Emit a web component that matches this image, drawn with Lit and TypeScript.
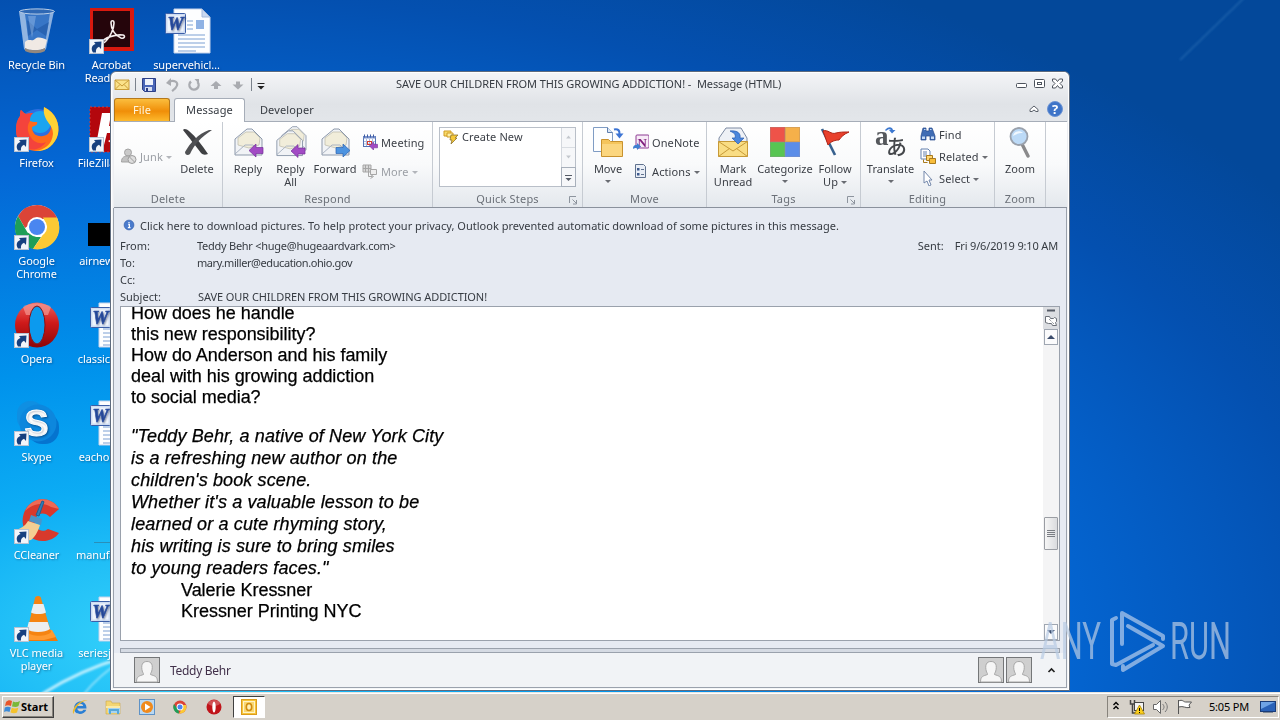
import { LitElement, html, css, svg, nothing, TemplateResult } from 'lit';
import { customElement, property } from 'lit/decorators.js';

const shortcut = svg`
  <rect x="1.500" y="32.500" width="14" height="14" fill="#f2f5fa" stroke="#b9c3d2"/>
  <path d="M5 45.500c-2.500-4-1-7.500 2.500-8.500L6 35l7.500-.5-.5 7.500-2-2.200C8.500 41 7.500 43 8 45.500z" fill="#17407f"/>`;

const wordDoc = svg`
  <path d="M11 2h28l8 8v36H11z" fill="#fdfeff" stroke="#c4d2ea"/>
  <path d="M39 2v8h8z" fill="#c9d8f0" stroke="#a6badb"/>
  <rect x="33" y="13" width="8" height="9" fill="#8fb2e4"/>
  <path d="M24 14h6M24 18h6M24 22h6M15 28h27M15 32h27M15 36h27M15 40h27M15 44h18" stroke="#7c9fd4" stroke-width="1.200"/>
  <rect x="2.500" y="6.500" width="20" height="20" rx="1" fill="#cfdcf2" stroke="#3c5fa8"/>
  <rect x="4.500" y="8.500" width="16" height="16" fill="#f0f5fd"/>
  <text x="12.500" y="23" text-anchor="middle" font-family="Liberation Serif" font-size="18" font-weight="700" font-style="italic" fill="#2b4fa3" stroke="#2b4fa3" stroke-width=".6">W</text>`;

const desktopArt: Record<string, TemplateResult> = {
  bin: svg`
    <path d="M6 4l5 38c5 4 17 4 22 0l8-38z" fill="#4a82cc" opacity=".75"/>
    <path d="M6 4l5 38c2 2 4 3 6 3L12 7z" fill="#c3d7f0" opacity=".65"/>
    <path d="M33 42L41 4l-4 2-6 38z" fill="#c3d7f0" opacity=".6"/>
    <path d="M14 13l10 9 12-7-3 14-9-6-9 6z" fill="#1f56a4" opacity=".6"/>
    <path d="M15 9h8l-4 22z" fill="#a9c7ea" opacity=".4"/>
    <path d="M12 35c4-4 7 0 10-3s8-1 12 1l-2 8c-5 3-14 3-20 0z" fill="#f0e9e4"/>
    <path d="M12 41c5 3 15 3 20 0v3c-5 3-14 3-20 0z" fill="#94887e"/>
    <ellipse cx="24" cy="4.500" rx="17.500" ry="2.600" fill="#2f68b4" stroke="#bccfe6"/>`,
  acrobat: svg`
    <rect x="2" y="1" width="44" height="43" fill="#d8190f"/>
    <rect x="5" y="4" width="37" height="36" fill="#25050b"/>
    <path d="M14 35c2-4 13-8 21-7 3 1 1 4-2 3-5-2-10-8-10-15 0-3 3-3 3 0 0 6-4 14-8 18-2 2-4 3-4 1z" fill="none" stroke="#f4eded" stroke-width="1.600"/>
    ${shortcut}`,
  word: wordDoc,
  firefox: svg`
    <circle cx="25" cy="24" r="20" fill="#2f6fe0"/>
    <circle cx="27" cy="17" r="11" fill="#1aa4f0"/>
    <path d="M31 2c12 6 16 17 14 27-3 12-13 18-23 17C11 45 3 37 3 25c0-6 1-10 4-14 0-2 0-5 1-6 2 2 3 3 5 4 3-1 5-1 7-1-3 3-3 5-3 8 2 1 5 1 7 1 1 2-1 4-5 5 0 7 5 10 11 9 8-1 10-10 6-17-1-4-4-8-5-12z" fill="#ff6a1c"/>
    <path d="M31 2c12 6 16 17 14 27-3 12-13 18-23 17 9-1 17-6 18-17 0-6-3-9-5-12-3-4-5-9-4-15z" fill="#ffd234"/>
    <path d="M3 25c0-6 1-10 4-14 0-2 0-5 1-6 2 2 3 3 5 4 3-1 5-1 7-1-3 3-3 5-3 8-3 4-3 10 0 15 3 6 10 9 16 6-4 6-12 10-20 6C7 39 3 33 3 25z" fill="#f0334a" opacity=".7"/>
    ${shortcut}`,
  filezilla: svg`
    <rect x="2" y="2" width="45" height="45" fill="#b3070d" stroke="#d23a3a" stroke-dasharray="2 2"/>
    <path d="M14 8h26l-2 7H22l-1 6h13l-2 7H19l-3 12H8z" fill="#fff"/>
    <path d="M20 36l6-3v7z" fill="#fff"/>${shortcut}`,
  chrome: svg`
    <circle cx="24" cy="24" r="22" fill="#fff"/>
    <path d="M24 2a22 22 0 0 1 20.500 14H24L12 25 5 13A22 22 0 0 1 24 2z" fill="#db4437"/>
    <path d="M5 13l9.500 16.500L24 34l4 0-8 12A22 22 0 0 1 5 13z" fill="#1e9e57"/>
    <path d="M44 14.500A22 22 0 0 1 20 46l9-13 5-9-4-9.500z" fill="#fcc934"/>
    <circle cx="24" cy="24" r="10" fill="#fff"/><circle cx="24" cy="24" r="8" fill="#4a86f0"/>
    ${shortcut}`,
  black: svg`<rect x="0" y="20" width="48" height="23" fill="#000"/>`,
  opera: svg`
    <ellipse cx="24" cy="24" rx="22" ry="22.500" fill="url(#op)"/>
    <defs><linearGradient id="op" x1="0" y1="0" x2="0" y2="1"><stop offset="0" stop-color="#f0605c"/><stop offset=".45" stop-color="#cf1a1a"/><stop offset="1" stop-color="#8d0506"/></linearGradient></defs>
    <path d="M10 6c8-5 20-5 28 0l-3 8H13z" fill="#f7a6a0" opacity=".6"/>
    <ellipse cx="24" cy="24" rx="8" ry="19" fill="#0c9aee" stroke="#8a1012"/>
    ${shortcut}`,
  skype: svg`
    <rect x="4" y="2" width="27" height="30" rx="13" fill="#0f8fe2"/>
    <rect x="15" y="14" width="31" height="31" rx="14" fill="#0574cf"/>
    <circle cx="25" cy="24" r="18.500" fill="#0d87dd"/>
    <text x="23.500" y="37" text-anchor="middle" font-family="Liberation Sans" font-size="36" font-weight="700" fill="#fff" stroke="#fff">S</text>
    ${shortcut}`,
  ccleaner: svg`
    <path d="M46 12L37 20c-6-6-13-4-15 3-1 8 6 14 13 9l11 4c-6 9-21 11-30 3-9-9-8-23 0-31 9-9 24-7 30 4z" fill="#d8392c"/>
    <path d="M46 12C40 1 25-1 16 8c-2 2-3 4-4 6 8-8 19-9 26-4z" fill="#ee6a55"/>
    <path d="M29 4l2 .8L26 19l-3-1z" fill="#2e7fb8" stroke="#1d5f94"/>
    <path d="M18 18l11 4-1 6-12-4z" fill="#4b94c8"/>
    <path d="M15 24l12 4c-2 7-6 13-9 15-6 1-12-1-17-10 7-1 11-4 14-9z" fill="#f4cf93"/>
    ${shortcut}`,
  blank: svg`<path d="M6 45.500h42" stroke="#2a8fb8"/>`,
  vlc: svg`
    <path d="M11 36h28l6 10H12z" fill="#ef7a0c"/><path d="M9 38l5-3h25l4 7-12 3H12z" fill="#ff9a30"/>
    <path d="M25 1c2 0 3 1 3 2l10 34c-4 5-20 5-24 0L22 3c0-1 1-2 3-2z" fill="#f58412"/>
    <path d="M20.500 9h10l2.500 8.500c-4 2-11 2-15 0zM15.700 27h19l2.300 7c-5 4-19 4-23 0z" fill="#eceeef"/>
    ${shortcut}`,
};

const envelope = svg`
  <path d="M3 13L15 3h5l10 10v16H3z" fill="#f1f3f6" stroke="#8d99ab"/>
  <path d="M6 12l8-6h8l6 6-1 7-10 3-11-3z" fill="#f1edda" stroke="#b9b7a6" stroke-width=".7"/>
  <path d="M3 28l10-9h8l9 9" fill="none" stroke="#a9b3c2"/>`;

const icons: Record<string, TemplateResult> = {
  mail: svg`<path d="M1 3h14v9.500H1z" fill="#fbe28a" stroke="#c99d38"/><path d="M1 3l7 6 7-6M1 12.500l5-5M15 12.500l-5-5" fill="none" stroke="#c99d38"/>`,
  save: svg`<path d="M1.500 1.500h13v13h-11l-2-2z" fill="#4a66b8" stroke="#2c3f86"/><rect x="4" y="2" width="8" height="6" fill="#eef2fb"/><rect x="4" y="10" width="7" height="4" fill="#d6def2"/><rect x="5" y="11" width="2" height="3" fill="#2c3f86"/>`,
  undo: svg`<path d="M5 4.500c6-2 9 1 8 4s-3 4-5 5.500" fill="none" stroke="#a9abb0" stroke-width="2.200"/><path d="M7 1v8L2 6z" fill="#a9abb0"/>`,
  redo: svg`<path d="M5 4.500a4.600 4.600 0 1 0 6.500.5" fill="none" stroke="#a9abb0" stroke-width="2.400"/><path d="M8.500 2H13v5z" fill="#a9abb0"/>`,
  up: svg`<path d="M8 4l5.500 5h-3.500v3H6V9H2.500z" fill="#a9abb0"/>`,
  down: svg`<path d="M8 12.500l5.500-5h-3.500v-3H6v3H2.500z" fill="#a9abb0"/>`,
  more: svg`<path d="M4.500 6.500h7" stroke="#222"/><path d="M4.500 9h7L8 12.500z" fill="#222"/>`,
  junk: svg`<circle cx="7" cy="4.500" r="3.500" fill="#c9c9c9" stroke="#a3a3a3"/><path d="M.5 14c0-5 3-6 6.500-6s5 1 5 3v3z" fill="#c2c2c2" stroke="#a3a3a3"/><circle cx="11" cy="11.500" r="4" fill="#dedede" stroke="#9c9c9c"/><path d="M8.500 9l5 5" stroke="#9c9c9c"/>`,
  cross: svg`<path d="M2 4c1-2 4-1 6 1 7 6 13 14 19 23-3 1-5 1-7-1C14 19 9 13 2 4z" fill="#3f4043"/><path d="M31 4C20 11 13 19 9 28c-2 2-5 1-5-2C9 17 17 8 28 4z" fill="#505154"/>`,
  reply: svg`${envelope}<path d="M17 24.500l7-6.500v3.500h7v6h-7V31z" fill="#a24bc4" stroke="#74309a" stroke-width=".7"/>`,
  replyAll: svg`<g transform="translate(4 -2) scale(.9)">${envelope}</g><g transform="translate(-1 2) scale(.95)">${envelope}</g><path d="M16 25l7-6.500V22h7v6h-7v3.500z" fill="#a24bc4" stroke="#74309a" stroke-width=".7"/>`,
  forward: svg`${envelope}<path d="M31 24.500l-7-6.500v3.500h-7v6h7V31z" fill="#4c93e0" stroke="#2a62b0" stroke-width=".7"/>`,
  meeting: svg`<rect x="1.500" y="2.500" width="12" height="10" fill="#fff" stroke="#5473b4"/><path d="M1.500 2h12v2.500h-12z" fill="#7d95cc"/><path d="M2.500 .5v3M5.500 .5v3M8.500 .5v3M11.500 .5v3" stroke="#3f5da4"/><path d="M4.500 5v7M7.500 5v7M10.500 5v7M2 7.500h11M2 10h11" stroke="#a9bae0"/><rect x="5.500" y="7.500" width="4" height="3" fill="none" stroke="#d43d30"/><path d="M7.500 12l4-4v2.300h4v3.500h-4V16z" fill="#a24bc4" stroke="#74309a" stroke-width=".6"/>`,
  moreReply: svg`<path d="M1 2h8v7H1zM3.500 2v7M6.500 2v7M1 5.500h8" fill="#d8d8d8" stroke="#a6a6a6"/><path d="M8.500 6.500h6v5h-6z" fill="#eee" stroke="#a6a6a6"/><path d="M6.500 9v4.500h4m-2-2l3 2-3 2" fill="none" stroke="#a6a6a6"/>`,
  bolt: svg`<path d="M1 2h7v5H1z" fill="#f8dc6c" stroke="#d09b22"/><path d="M4 4h6v4H4z" fill="#fff0a8" stroke="#d09b22"/><path d="M8 6h7l-3 3h2l-6 6 1-4H7z" fill="#f6c838" stroke="#8d7430" stroke-width=".8"/>`,
  move: svg`<path d="M1.500 1.500h14l5 5v19h-19z" fill="#fdfeff" stroke="#7f9cc4"/><path d="M15.500 1.500v5h5" fill="#dbe7f6" stroke="#5f7fae"/><path d="M9.500 13.500h7l2 2h12v15h-21z" fill="#f5c55c" stroke="#c8922e"/><path d="M10 18h20v12H10z" fill="#fbd67f"/><path d="M22 3.500c4-1 6 1 5.500 5" fill="none" stroke="#3c74d4" stroke-width="2.200"/><path d="M23.500 7.500h8l-4 5z" fill="#3c74d4"/>`,
  onenote: svg`<rect x="3" y="1" width="13" height="13" rx="1" fill="#f7ebf7" stroke="#8d3a93"/><text x="9.300" y="12.500" text-anchor="middle" font-family="Liberation Serif" font-size="13" font-weight="700" fill="#80207e">N</text><path d="M0 15c0-4 2-4 4-4V9l4 3.500L4 16v-2c-2 0-3 0-4 1z" fill="#3f7ed0"/>`,
  actions: svg`<path d="M2.500 1.500h8l2 2v11h-10z" fill="#e9eef6" stroke="#60728e"/><path d="M4 5h2.500v2.500H4zM4 10h2.500v2.500H4z" fill="#3e5a8c"/><path d="M8 6.500h3M8 11.500h3" stroke="#60728e"/>`,
  unread: svg`<path d="M2 12L9 2h15l6 10v15H2z" fill="#eef1f6" stroke="#7c8aa2"/><path d="M1.500 15.500h29v15h-29z" fill="#f9dd84" stroke="#c79a38"/><path d="M1.500 15.500L16 25l14.500-9.500M1.500 30.500l11-8M30.500 30.500l-11-8" fill="none" stroke="#c79a38"/><path d="M13 5c8-1 11 3 10 7h4l-6 6-6-6h3c1-4-1-5-5-7z" fill="#4a86dc" stroke="#2a5bb0" stroke-width=".7"/>`,
  categorize: svg`<rect x="1.500" y="1.500" width="14" height="14" fill="#ee5349" stroke="#d2655d"/><rect x="16.500" y="1.500" width="14" height="14" fill="#f5b04a" stroke="#d9a155"/><rect x="1.500" y="16.500" width="14" height="14" fill="#58c553" stroke="#6bb368"/><rect x="16.500" y="16.500" width="14" height="14" fill="#5b8de8" stroke="#6d8fd4"/>`,
  flag: svg`<path d="M3 3l13 26" stroke="#38618e" stroke-width="2.600"/><path d="M4 5c5-2 8 4 13 2 4-1 7-1 13-1-5 2-8 5-10 8-3 0-8 1-11 5z" fill="#e8402c" stroke="#b02517"/>`,
  translate: svg`<text x="0" y="19" font-family="Liberation Serif" font-size="27" font-weight="700" fill="#55585c">a</text><text x="11" y="28" font-family="Noto Sans CJK JP" font-size="21" font-weight="500" fill="#45484c">あ</text><path d="M10 4c4-4 7-3 8 0h2.500L17 7.500 14 4h2c-1-1-3-1-5 1z" fill="#3c78d0"/>`,
  find: svg`<path d="M3 2h3v3h3V2h3l3 8v4h-5v-4H6v4H1v-4z" fill="#3f6cb4" stroke="#27498a" stroke-width=".7"/><path d="M2 10.500h3v2.500H2zM11 10.500h3v2.500h-3z" fill="#c4daf6"/><path d="M4 3.500h1.500M10 3.500h1.500" stroke="#c4daf6"/>`,
  related: svg`<path d="M1 1h7l2 2v8H1z" fill="#fff" stroke="#6481ae"/><path d="M3 4h4M3 6h4M3 8h4" stroke="#6481ae"/><path d="M6.500 7.500h6v5h-6z" fill="#ffd774" stroke="#a97a1c"/><path d="M9.500 10.500h6v5h-6z" fill="#f8bd3b" stroke="#a97a1c"/><path d="M3.500 11.500v3h4" fill="none" stroke="#a97a1c"/>`,
  select: svg`<path d="M4 1l8 9H9l2 5-2 1-2-5-3 2z" fill="#fff" stroke="#7488ab"/>`,
  zoom: svg`<path d="M18 18l6 12" stroke="#8a8a8c" stroke-width="3.400" stroke-linecap="round"/><circle cx="15" cy="10.500" r="8.500" fill="#bcdaf7" stroke="#9aa1ac" stroke-width="1.800"/><path d="M9 10c1-5 7-6 10-3-4 0-7 1-10 3z" fill="#f1f8ff"/>`,
  info: svg`<circle cx="8" cy="8" r="6.500" fill="#4a7bcd" stroke="#3560ad"/><path d="M8 4v2M7 7.500h1.500v4M6.500 11.500h3.500" fill="none" stroke="#fff" stroke-width="1.600"/>`,
  person: svg`<rect x=".5" y=".5" width="25" height="25" fill="#cfcfcf" stroke="#747678"/><path d="M2.500 25c0-6 3-6 7-7.500 0-1 0-1-1-2.500-2-7 0-10.500 4.500-10.500s6.500 3.500 4.500 10.500c-1 1.500-1 1.500-1 2.500 4 1.500 7 1.500 7 7.500z" fill="#f6f6f6" stroke="#a7a7a7"/>`,
};

const taskArt: Record<string, TemplateResult> = {
  ie: svg`<path d="M14.500 9.500H5.300c.4 3.500 5 3.500 6 1.200h3c-1.500 5.500-11.800 6-12.200-1C2 0.500 14.500 0 14.500 9.500zM5.500 7h5.700c-.5-3-5-3-5.700 0z" fill="#2a7fd4" fill-rule="evenodd"/><path d="M1.500 15C-2 10 9-1 15.500 1.500c-6 0-12.500 7-14 13.500z" fill="#e9b92c"/>`,
  explorer: svg`<path d="M1 2h5l1 2h8v11H1z" fill="#f3d573" stroke="#cda945" stroke-width=".6"/><path d="M3 8h12v6H3z" fill="#a8d4f0"/><path d="M1 7h14v2H1z" fill="#fbeaa5"/><path d="M4 10h10v5h-2v-3H6v3H4z" fill="#58a8d8"/>`,
  player: svg`<rect x=".5" y=".5" width="15" height="15" fill="#b9d8f2" stroke="#5e92c6"/><circle cx="8" cy="8" r="6" fill="#f08a1c"/><path d="M6 4.500v7L11.500 8z" fill="#fff"/>`,
  chrome: svg`<circle cx="8" cy="8" r="6.500" fill="#db4437"/><path d="M2 5l4.500 6L7 14.500A6.500 6.500 0 0 1 2 5z" fill="#1e9e57"/><path d="M14 6a6.500 6.500 0 0 1-7 8.500L11 8 9 6z" fill="#fcc934"/><circle cx="8" cy="8" r="3.400" fill="#fff"/><circle cx="8" cy="8" r="2.500" fill="#4a86f0"/>`,
  opera: svg`<circle cx="8" cy="8" r="7.500" fill="#c0141a"/><ellipse cx="8" cy="8" rx="1.700" ry="5.600" fill="#fff"/><ellipse cx="8" cy="4" rx="6" ry="3" fill="#fff" opacity=".25"/>`,
  outlook: svg`<rect x=".5" y=".5" width="15" height="15" fill="#f7c53a" stroke="#dc9c1a"/><rect x="2.500" y="2.500" width="11" height="11" fill="#f9d872" stroke="#fff3c8"/><ellipse cx="8" cy="8" rx="2.700" ry="3.500" fill="#fff0b8" stroke="#d08c10" stroke-width="1.600"/>`,
};

@customElement('desk-icon')
export class DeskIcon extends LitElement {
  static styles = css`
    :host {
      display: flex;
      flex-direction: column;
      align-items: center;
      color: #fff;
      font: 11px/13px 'Noto Sans', sans-serif;
      text-align: center;
      text-shadow: 1px 1px 2px rgba(0, 20, 60, 0.4);
    }

    .art {
      width: 48px;
      height: 48px;
      margin-bottom: 3px;
      flex: none;
    }

    .label {
      white-space: pre;
      letter-spacing: -0.1px;
    }
  `;

  @property() name = '';
  @property() label = '';

  render() {
    return html`
      <svg class="art" viewBox="0 0 48 48">${desktopArt[this.name]}</svg>
      <span class="label">${this.label}</span>
    `;
  }
}

@customElement('ribbon-button')
export class RibbonButton extends LitElement {
  static styles = css`
    :host {
      display: flex;
      align-items: center;
      color: #3b3f46;
      font: 11px/13px 'Noto Sans', sans-serif;
      letter-spacing: 0.1px;
    }

    :host([large]) {
      flex-direction: column;
      text-align: center;
      flex: none;
      letter-spacing: 0;
    }

    :host([disabled]) {
      color: #9b9fa5;
    }

    .icon {
      width: 16px;
      height: 16px;
      margin-right: 3px;
      flex: none;
    }

    :host([large]) .icon {
      width: 32px;
      height: 32px;
      margin: 0 0 4px;
    }

    .label {
      white-space: pre;
    }

    .arrow {
      display: inline-block;
      border: 3px solid transparent;
      border-top-color: currentColor;
      border-bottom: 0;
      margin-left: 3px;
      vertical-align: 2px;
      opacity: 0.75;
    }

    .below {
      margin: 5px 0 0;
    }
  `;

  @property() icon = '';
  @property() label = '';
  @property() arrow: '' | 'inline' | 'below' = '';
  @property({ type: Boolean, reflect: true }) large = false;
  @property({ type: Boolean, reflect: true }) disabled = false;

  render() {
    const size = this.large ? 32 : 16;
    return html`
      <svg class="icon" viewBox="0 0 ${size} ${size}">${icons[this.icon]}</svg>
      <span class="label">${this.label}${this.arrow === 'inline' ? html`<i class="arrow"></i>` : nothing}</span>
      ${this.arrow === 'below' ? html`<i class="arrow below"></i>` : nothing}
    `;
  }
}

@customElement('mail-window')
export class MailWindow extends LitElement {
  static styles = css`
    :host {
      display: flex;
      flex-direction: column;
      box-sizing: border-box;
      border: 1px solid #5e6b7e;
      border-radius: 6px 6px 0 0;
      padding: 0 2px 2px 3px;
      background: #f4f5f7;
      color: #363b42;
      font: 11px/13px 'Noto Sans', sans-serif;
      box-shadow: inset 0 0 0 1px #fff;
    }

    .i16 {
      display: block;
      width: 16px;
      height: 16px;
      flex: none;
    }

    .chrome {
      margin: 0 -1px;
      padding: 0 1px;
      border-radius: 5px 5px 0 0;
      background: linear-gradient(#f4f5f7, #e0e3e7 32px, #e3e6ea);
      box-shadow: inset 0 1px #fff;
    }

    .titlebar {
      display: grid;
      grid-template-columns: 282px 1fr 52px;
      align-items: center;
      height: 25px;
    }

    .quick {
      display: flex;
      align-items: center;
      gap: 6.200px;
    }

    .quick .bar {
      width: 1px;
      height: 13px;
      background: #7b828c;
      margin: 0 -1px 0 -1px;
    }

    .quick .last {
      margin: 0 -4px 0 -5px;
    }

    .title {
      white-space: pre;
      letter-spacing: -0.07px;
      margin-top: -2px;
    }

    .controls {
      display: flex;
      gap: 5px;
      margin-top: -3px;
    }

    .controls svg {
      width: 13px;
      height: 11px;
    }

    .tabs {
      display: flex;
      align-items: flex-end;
      height: 24px;
      border-bottom: 1px solid #a6adb8;
    }

    .tab {
      box-sizing: border-box;
      height: 23px;
      padding-top: 5px;
      text-align: center;
      letter-spacing: 0.15px;
    }

    .file {
      width: 56px;
      color: #fff6dd;
      border: 1px solid #b5781b;
      border-bottom: 0;
      border-radius: 3px 3px 0 0;
      background: linear-gradient(#fbbe3e, #f08e08 55%, #fdb92c);
      padding-top: 4px;
    }

    .active {
      width: 71px;
      height: 24px;
      margin: 0 1px -1px 4px;
      padding-top: 4px;
      border: 1px solid #a6adb8;
      border-bottom: 0;
      border-radius: 3px 3px 0 0;
      background: #fff;
    }

    .developer {
      width: 82px;
    }

    .tools {
      margin-left: auto;
      padding-right: 4px;
      display: flex;
      align-items: center;
      gap: 8px;
      height: 24px;
    }

    .ribbon {
      display: flex;
      height: 85px;
      border-bottom: 1px solid #8a919c;
      background: linear-gradient(#fff, #f9fafb 50%, #e4e8ed);
      box-shadow: 0 1px 1px #c9ced6;
    }

    .group {
      box-sizing: border-box;
      border-right: 1px solid #c6cbd2;
      display: grid;
      grid-template-rows: 70px 15px;
      position: relative;
    }

    .items {
      display: flex;
      padding-top: 4px;
    }

    .caption {
      text-align: center;
      color: #6b7078;
      letter-spacing: 0.2px;
    }

    .launcher {
      position: absolute;
      right: 4px;
      bottom: 2px;
      width: 9px;
      height: 9px;
    }

    .stack {
      display: flex;
      flex-direction: column;
    }

    .two {
      padding-top: 8px;
      gap: 13px;
    }

    .three {
      gap: 6px;
    }

    .gallery {
      box-sizing: border-box;
      width: 137px;
      height: 60px;
      margin: 1px 0 0 6px;
      border: 1px solid #b9bfc8;
      background: #fff;
      display: grid;
      grid-template-columns: 1fr 14px;
    }

    .gallery ribbon-button {
      height: 17px;
      padding-left: 3px;
    }

    .spin {
      display: grid;
      grid-template-rows: 20px 20px 18px;
      border-left: 1px solid #d4d8de;
      background: #f6f7f9;
    }

    .spin svg {
      width: 13px;
      height: 100%;
      border-bottom: 1px solid #d9dde2;
      box-sizing: border-box;
    }

    .spin .open {
      border: 1px solid #a8b0bb;
      margin: -1px 0 0 -1px;
      width: 15px;
      height: 20px;
    }

    .head {
      background: #e6eaf2;
      flex: 1;
      display: flex;
      flex-direction: column;
      padding: 0 6px 0;
      border: 1px solid #9aa1ac;
      border-top: 0;
      margin: 0 0 0 -1px;
    }

    .notice {
      display: flex;
      align-items: center;
      gap: 5px;
      height: 14px;
      padding: 10px 0 5px 3px;
      letter-spacing: 0.01px;
      white-space: nowrap;
    }

    .notice svg {
      width: 12px;
      height: 12px;
    }

    .row {
      display: grid;
      grid-template-columns: 77px 1fr auto auto;
      height: 17px;
      align-items: center;
      white-space: nowrap;
      padding-right: 2px;
    }

    .row .from {
      letter-spacing: -0.26px;
    }

    .row .to {
      letter-spacing: -0.42px;
    }

    .row .sent {
      margin-right: 11px;
    }

    .row .date {
      letter-spacing: -0.16px;
    }

    .row .subject {
      padding-left: 1px;
      letter-spacing: -0.07px;
    }

    .message {
      height: 333px;
      margin-top: 1px;
      border: 1px solid #9aa1ac;
      background: #fff;
      display: grid;
      grid-template-columns: 1fr 16px;
      overflow: hidden;
    }

    .text {
      padding-left: 10px;
      margin-top: -4px;
      color: #000;
      font: 18px/21px 'Liberation Sans', Arial, sans-serif;
      letter-spacing: -0.03px;
      -webkit-text-stroke: 0.25px #000;
      overflow: hidden;
    }

    .text p {
      margin: 0;
      white-space: pre;
    }

    .text .quote {
      margin: 17px 0 1px;
      line-height: 22px;
      font-style: italic;
      letter-spacing: 0.13px;
    }

    .text .sign {
      padding-left: 50px;
    }

    .scroll {
      display: flex;
      flex-direction: column;
      align-items: center;
      background: #f4f4f5;
    }

    .scroll .top {
      width: 16px;
      height: 22px;
      background: #dcdee2;
    }

    .scroll .key {
      box-sizing: border-box;
      width: 14px;
      height: 16px;
      border: 1px solid #9fa6b1;
      background: #fbfbfc;
    }

    .scroll .thumb {
      box-sizing: border-box;
      width: 14px;
      height: 33px;
      margin: 172px 0 74px;
      border: 1px solid #9a9da3;
      border-radius: 1px;
      background: linear-gradient(90deg, #f6f6f6, #dadbde);
    }

    .splitter {
      height: 3px;
      margin: 7px 0 0;
      border: 1px solid #9aa1ac;
      background: #d5dae3;
    }

    .people {
      display: flex;
      align-items: center;
      gap: 2px;
      flex: 1;
      margin: 0 -6px;
      padding: 0 10px 0 20px;
      background: #f1f3f6;
    }

    .people .face {
      width: 26px;
      height: 26px;
    }

    .people .name {
      margin: 0 auto 0 8px;
      color: #41304a;
      font-size: 12px;
      letter-spacing: -0.3px;
    }

    .people .chev {
      width: 9px;
      height: 8px;
      margin-left: 13px;
    }
  `;

  private readonly lines = [
    'How does he handle',
    'this new responsibility?',
    'How do Anderson and his family',
    'deal with his growing addiction',
    'to social media?',
  ];

  private readonly quote = [
    '"Teddy Behr, a native of New York City',
    'is a refreshing new author on the',
    "children's book scene.",
    "Whether it's a valuable lesson to be",
    'learned or a cute rhyming story,',
    'his writing is sure to bring smiles',
    'to young readers faces."',
  ];

  private icon(name: string) {
    return html`<svg class="i16" viewBox="0 0 16 16">${icons[name]}</svg>`;
  }

  private launcher() {
    return html`<svg class="launcher" viewBox="0 0 9 9"><path d="M.5 7V.5H7M3.500 3.500l4 4M7.500 4v4H4" fill="none" stroke="#8d949e" /></svg>`;
  }

  private big(icon: string, label: string, width: number, arrow = '') {
    return html`<ribbon-button large icon=${icon} label=${label} arrow=${arrow} style="width:${width}px"></ribbon-button>`;
  }

  private group(width: number, caption: string, body: TemplateResult, launch = false) {
    return html`
      <div class="group" style="width:${width}px">
        <div class="items">${body}</div>
        <div class="caption">${caption}</div>
        ${launch ? this.launcher() : nothing}
      </div>
    `;
  }

  render() {
    return html`
      <div class="chrome">
        <div class="titlebar">
          <div class="quick">
            ${this.icon('mail')}<i class="bar"></i>${this.icon('save')}${this.icon('undo')}${this.icon('redo')}
            ${this.icon('up')}${this.icon('down')}<i class="bar"></i><span class="last">${this.icon('more')}</span>
          </div>
          <div class="title">SAVE OUR CHILDREN FROM THIS GROWING ADDICTION! -  Message (HTML)</div>
          <div class="controls">
            <svg viewBox="0 0 13 11"><rect x="1.500" y="5.500" width="10" height="4" rx="1" fill="#fff" stroke="#4c525c" /></svg>
            <svg viewBox="0 0 13 11"><rect x="1.500" y="1.500" width="10" height="8" rx="1" fill="#fff" stroke="#4c525c" /><rect x="4.500" y="4.500" width="4" height="2" fill="none" stroke="#4c525c" /></svg>
            <svg viewBox="0 0 13 11"><path d="M1.500 1h3l2 2.500 2-2.500h3v2L9 5.500l2.500 2.500v2h-3l-2-2.500-2 2.500h-3V8L4 5.500 1.500 3z" fill="#fff" stroke="#4c525c" /></svg>
          </div>
        </div>
        <div class="tabs">
          <div class="tab file">File</div>
          <div class="tab active">Message</div>
          <div class="tab developer">Developer</div>
          <div class="tools">
            <svg width="10" height="8" viewBox="0 0 10 8"><path d="M5 1l4 3.500v2H7L5 5 3 6.500H1v-2z" fill="#fff" stroke="#5a606a" /></svg>
            <svg width="16" height="16" viewBox="0 0 16 16"><circle cx="8" cy="8" r="7.500" fill="#3e74c8" stroke="#6c94d4" /><text x="8" y="12.500" text-anchor="middle" font-family="Open Sans" font-size="13" font-weight="700" fill="#fff">?</text></svg>
          </div>
        </div>
      </div>
      <div class="ribbon">
        ${this.group(109, 'Delete', html`
          <ribbon-button disabled icon="junk" label="Junk" arrow="inline" style="width:53px;padding-left:7px;height:60px"></ribbon-button>
          ${this.big('cross', 'Delete', 46)}
        `)}
        ${this.group(210, 'Respond', html`
          ${this.big('reply', 'Reply', 50)}${this.big('replyAll', 'Reply\nAll', 35)}${this.big('forward', 'Forward', 54)}
          <div class="stack two">
            <ribbon-button icon="meeting" label="Meeting"></ribbon-button>
            <ribbon-button disabled icon="moreReply" label="More" arrow="inline"></ribbon-button>
          </div>
        `)}
        ${this.group(150, 'Quick Steps', html`
          <div class="gallery">
            <ribbon-button icon="bolt" label="Create New"></ribbon-button>
            <div class="spin">
              <svg viewBox="0 0 13 20"><path d="M4 11h5L6.500 8z" fill="#c3c7cd" /></svg>
              <svg viewBox="0 0 13 20"><path d="M4 8h5l-2.500 3z" fill="#c3c7cd" /></svg>
              <svg class="open" viewBox="0 0 13 18"><path d="M3 7.500h7" stroke="#555b66" /><path d="M3.500 10h6l-3 3z" fill="#555b66" /></svg>
            </div>
          </div>
        `, true)}
        ${this.group(124, 'Move', html`
          ${this.big('move', 'Move', 50, 'below')}
          <div class="stack two">
            <ribbon-button icon="onenote" label="OneNote"></ribbon-button>
            <ribbon-button icon="actions" label="Actions" arrow="inline"></ribbon-button>
          </div>
        `)}
        ${this.group(154, 'Tags', html`
          ${this.big('unread', 'Mark\nUnread', 52)}${this.big('categorize', 'Categorize', 52, 'below')}${this.big('flag', 'Follow\nUp', 48, 'inline')}
        `, true)}
        ${this.group(134, 'Editing', html`
          ${this.big('translate', 'Translate', 59, 'below')}
          <div class="stack three">
            <ribbon-button icon="find" label="Find"></ribbon-button>
            <ribbon-button icon="related" label="Related" arrow="inline"></ribbon-button>
            <ribbon-button icon="select" label="Select" arrow="inline"></ribbon-button>
          </div>
        `)}
        ${this.group(51, 'Zoom', html`${this.big('zoom', 'Zoom', 50)}`)}
      </div>
      <div class="head">
        <div class="notice">
          <svg viewBox="0 0 16 16">${icons.info}</svg>
          <span>Click here to download pictures. To help protect your privacy, Outlook prevented automatic download of some pictures in this message.</span>
        </div>
        <div class="row"><span>From:</span><span class="from">Teddy Behr &lt;huge@hugeaardvark.com&gt;</span><span class="sent">Sent:</span><span class="date">Fri 9/6/2019 9:10 AM</span></div>
        <div class="row"><span>To:</span><span class="to">mary.miller@education.ohio.gov</span></div>
        <div class="row"><span>Cc:</span></div>
        <div class="row"><span>Subject:</span><span class="subject">SAVE OUR CHILDREN FROM THIS GROWING ADDICTION!</span></div>
        <div class="message">
          <div class="text">
            ${this.lines.map((line) => html`<p>${line}</p>`)}
            <div class="quote">${this.quote.map((line) => html`<p>${line}</p>`)}</div>
            <p class="sign">Valerie Kressner</p>
            <p class="sign">Kressner Printing NYC</p>
          </div>
          <div class="scroll">
            <svg class="top" viewBox="0 0 16 22"><path d="M4 3.500h8" stroke="#555b66" stroke-width="2" /><path d="M2.500 9.500h4l1 2h3l1-1 2 1v3l-1 1 1 3h-4l-1-2h-3l-3-1z" fill="#fff" stroke="#6b7078" /><path d="M6 12l5 5" stroke="#6b7078" stroke-dasharray="1 1" /></svg>
            <svg class="key" viewBox="0 0 12 14"><path d="M2 9h8L6 5z" fill="#3c4c6c" /></svg>
            <svg class="thumb" viewBox="0 0 12 31"><path d="M2 12.500h8M2 14.500h8M2 16.500h8M2 18.500h8" stroke="#7a7d83" /></svg>
            <svg class="key" viewBox="0 0 12 14"><path d="M2 5h8L6 9z" fill="#3c4c6c" /></svg>
          </div>
        </div>
        <div class="splitter"></div>
        <div class="people">
          <svg class="face" viewBox="0 0 26 26">${icons.person}</svg>
          <span class="name">Teddy Behr</span>
          <svg class="face" viewBox="0 0 26 26">${icons.person}</svg>
          <svg class="face" viewBox="0 0 26 26">${icons.person}</svg>
          <svg class="chev" viewBox="0 0 9 8"><path d="M1.500 6l3-3 3 3" fill="none" stroke="#222" stroke-width="1.700" /></svg>
        </div>
      </div>
    `;
  }
}

@customElement('task-bar')
export class TaskBar extends LitElement {
  static styles = css`
    :host {
      display: flex;
      align-items: center;
      box-sizing: border-box;
      height: 28px;
      padding: 2px 1px 2px 2px;
      background: #d6d1c9;
      border-top: 1px solid #e8e5df;
      box-shadow: inset 0 1px #fff;
      font: 11px/13px 'Noto Sans', sans-serif;
      color: #000;
    }

    .start {
      display: flex;
      align-items: center;
      box-sizing: border-box;
      width: 52px;
      height: 22px;
      padding-left: 1px;
      border: 1px solid;
      border-color: #fff #404040 #404040 #fff;
      box-shadow: inset -1px -1px #87837c;
      font-weight: 700;
      letter-spacing: 0;
    }

    .apps {
      display: flex;
      align-items: center;
      margin-left: 9px;
    }

    .app {
      box-sizing: border-box;
      width: 33.500px;
      display: flex;
      justify-content: center;
    }

    .open {
      width: 32px;
      height: 22px;
      padding-top: 2px;
      margin-left: 2px;
      border: 1px solid;
      border-color: #404040 #fff #fff #404040;
      background: #fff;
    }

    .tray {
      box-sizing: border-box;
      display: flex;
      align-items: center;
      width: 172px;
      height: 22px;
      margin-left: auto;
      padding: 0 2px 0 4px;
      border: 1px solid;
      border-color: #87837c #fff #fff #87837c;
    }

    .clock {
      margin: 0 auto 0 15px;
      letter-spacing: -0.2px;
    }
  `;

  render() {
    return html`
      <div class="start">
        <svg width="17" height="16" viewBox="0 0 17 16">
          <path d="M2 3c2-2 4-2 6-1L7 7C5 6 3 6 1 7z" fill="#e8562a" /><path d="M9 2.500c2 1 4 1 7-.5l-1.500 5c-2 1.500-4 1-6.500.5z" fill="#7ab83a" />
          <path d="M.800 8.500c2-1 4-1 6 0L5.500 13c-2-1-4-1-5.500 0z" fill="#3c8bd8" /><path d="M7.800 8.700c2 1 4 1 6.500 0L13 13.500c-2 1-4 1-6.500 0z" fill="#f5c22c" />
        </svg>
        Start
      </div>
      <div class="apps">
        ${Object.entries(taskArt).map(([name, art]) => html`
          <div class="app ${name === 'outlook' ? 'open' : ''}"><svg width="16" height="16" viewBox="0 0 16 16">${art}</svg></div>
        `)}
      </div>
      <div class="tray">
        <svg width="82" height="18" viewBox="0 0 82 18">
          <path d="M1.500 7l2.500-2.500L6.500 7M1.500 11l2.500-2.500 2.500 2.500" fill="none" stroke="#000" stroke-width="1.400" />
          <path d="M18.500 2v4h4V2M20.500 6v9h6" fill="none" stroke="#444" stroke-width="1.500" />
          <rect x="22.500" y="4.500" width="9" height="8" fill="#f4f4f4" stroke="#444" /><path d="M27.500 7l5 9h-10z" fill="#fbcf1c" stroke="#a88308" stroke-width=".8" /><path d="M27.500 10v3M27.500 14v1" stroke="#000" />
          <path d="M41.500 6.500h3l4-4v13l-4-4h-3z" fill="#fff" stroke="#666" /><path d="M50.500 6c2 2 2 4 0 6M53 4c3 3 3 7 0 10" fill="none" stroke="#777" />
          <path d="M66.500 2v14M66.500 3c4-2 5 1 7 1h6l-2.500 3 1 2.500c-5 1-6-2-11.500-.5z" fill="#fff" stroke="#555" />
        </svg>
        <span class="clock">5:05 PM</span>
        <svg width="16" height="14" viewBox="0 0 16 14"><rect x=".5" y="1.500" width="15" height="10" fill="#2a62b8" stroke="#1a3c78" /><path d="M1 2h14L1 9z" fill="#6fa4e6" /><path d="M3 12.500h10" stroke="#7d8794" /></svg>
      </div>
    `;
  }
}

@customElement('app-root')
export class AppRoot extends LitElement {
  static styles = css`
    :host {
      display: grid;
      grid-template-rows: 692px 28px;
      width: 1280px;
      height: 720px;
      overflow: hidden;
      position: relative;
    }

    .desktop {
      position: relative;
      overflow: hidden;
      background: radial-gradient(
        ellipse 1400px 760px at 150px 640px,
        #35d2fb 0,
        #22c0f7 10%,
        #0cacf4 20%,
        #0092ec 36%,
        #0468d6 62%,
        #0450b0 85%,
        #03489a 100%
      );
    }

    .rays {
      position: absolute;
      inset: 0;
    }

    .grid {
      position: relative;
      display: grid;
      grid-template-columns: repeat(3, 75px);
      grid-auto-rows: 98px;
      margin: 7px 0 0 -1px;
    }

    mail-window {
      position: absolute;
      left: 110px;
      top: 71px;
      width: 960px;
      height: 620px;
    }

    .watermark {
      position: absolute;
      left: 1036px;
      top: 606px;
      width: 200px;
      height: 70px;
    }
  `;

  // row by row; the empty cells sit behind the window
  private readonly cells: Array<[string, string] | null> = [
    ['bin', 'Recycle Bin'], ['acrobat', 'Acrobat\nReader DC'], ['word', 'supervehicl…'],
    ['firefox', 'Firefox'], ['filezilla', 'FileZilla Clie…'], null,
    ['chrome', 'Google\nChrome'], ['black', 'airnewslett…'], null,
    ['opera', 'Opera'], ['word', 'classictheat…'], null,
    ['skype', 'Skype'], ['word', 'eachoption…'], null,
    ['ccleaner', 'CCleaner'], ['blank', 'manufacturi…'], null,
    ['vlc', 'VLC media\nplayer'], ['word', 'seriesjanua…'], null,
  ];

  render() {
    return html`
      <div class="desktop">
        <svg class="rays" width="1280" height="692" viewBox="0 0 1280 692">
          <defs><filter id="soft"><feGaussianBlur stdDeviation="1.200" /></filter></defs>
          <g filter="url(#soft)" fill="none" stroke="#dff8ff">
            <path d="M42 694Q80 670 125 657" stroke-width="3" opacity=".8" />
            <path d="M84 694Q98 676 125 658" stroke-width="2" opacity=".55" />
            <path d="M1180 60L1246-4" stroke="#6cb0e0" stroke-width="2" opacity=".2" />
          </g>
        </svg>
        <div class="grid">
          ${this.cells.map((cell) => cell ? html`<desk-icon name=${cell[0]} label=${cell[1]}></desk-icon>` : html`<span></span>`)}
        </div>
        <mail-window></mail-window>
      </div>
      <task-bar></task-bar>
      <svg class="watermark" viewBox="0 0 200 70">
        <g fill="#b9cce4" opacity=".7" font-family="Roboto" font-weight="400" font-size="52">
          <text x="4" y="53" textLength="61" lengthAdjust="spacingAndGlyphs">ANY</text>
          <text x="134" y="53" textLength="61" lengthAdjust="spacingAndGlyphs">RUN</text>
        </g>
        <path d="M80 12l-4 2v44l4 1 37-20M86 38V7l41 23v3M92 20l35 20-40 24v-4" fill="none" stroke="#a9c6ea" stroke-width="4" stroke-linejoin="round" stroke-linecap="round" opacity=".75" />
      </svg>
    `;
  }
}

declare global {
  interface HTMLElementTagNameMap {
    'desk-icon': DeskIcon;
    'ribbon-button': RibbonButton;
    'mail-window': MailWindow;
    'task-bar': TaskBar;
    'app-root': AppRoot;
  }
}
